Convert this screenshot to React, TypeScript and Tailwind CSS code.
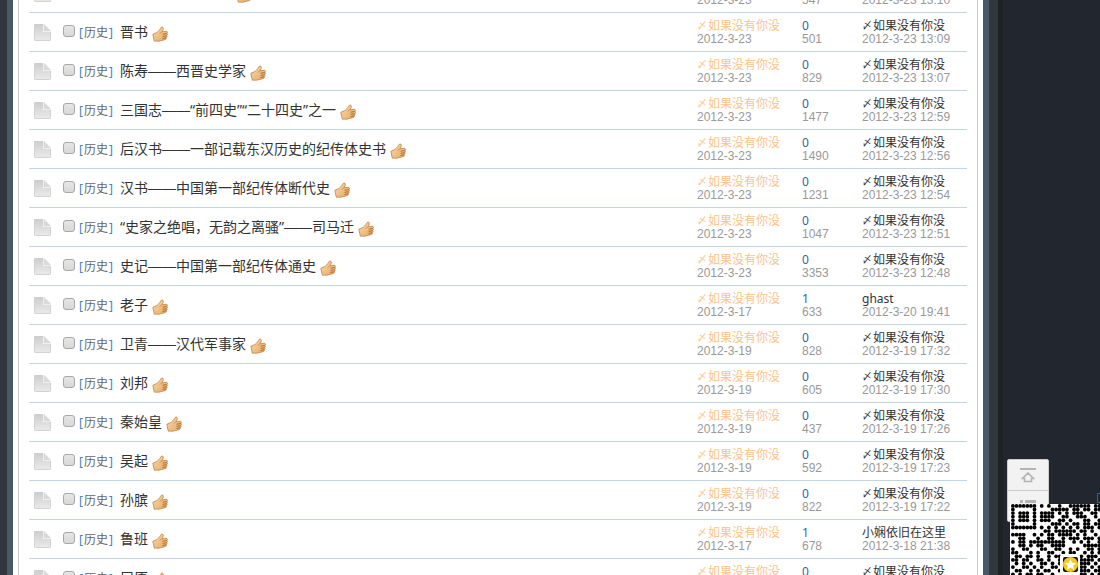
import { useState } from 'react'

interface Thread {
  title:    string
  author:   string
  date:     string
  replies:  number
  views:    number
  lastBy:   string
  lastDate: string
}

const ME = '〆如果没有你没'

const threads: Thread[] = [
  { title: '房玄龄——唐名相', author: ME, date: '2012-3-23', replies: 0, views: 547, lastBy: ME, lastDate: '2012-3-23 13:10' },
  { title: '晋书', author: ME, date: '2012-3-23', replies: 0, views: 501, lastBy: ME, lastDate: '2012-3-23 13:09' },
  { title: '陈寿——西晋史学家', author: ME, date: '2012-3-23', replies: 0, views: 829, lastBy: ME, lastDate: '2012-3-23 13:07' },
  { title: '三国志——“前四史”“二十四史”之一', author: ME, date: '2012-3-23', replies: 0, views: 1477, lastBy: ME, lastDate: '2012-3-23 12:59' },
  { title: '后汉书——一部记载东汉历史的纪传体史书', author: ME, date: '2012-3-23', replies: 0, views: 1490, lastBy: ME, lastDate: '2012-3-23 12:56' },
  { title: '汉书——中国第一部纪传体断代史', author: ME, date: '2012-3-23', replies: 0, views: 1231, lastBy: ME, lastDate: '2012-3-23 12:54' },
  { title: '“史家之绝唱，无韵之离骚”——司马迁', author: ME, date: '2012-3-23', replies: 0, views: 1047, lastBy: ME, lastDate: '2012-3-23 12:51' },
  { title: '史记——中国第一部纪传体通史', author: ME, date: '2012-3-23', replies: 0, views: 3353, lastBy: ME, lastDate: '2012-3-23 12:48' },
  { title: '老子', author: ME, date: '2012-3-17', replies: 1, views: 633, lastBy: 'ghast', lastDate: '2012-3-20 19:41' },
  { title: '卫青——汉代军事家', author: ME, date: '2012-3-19', replies: 0, views: 828, lastBy: ME, lastDate: '2012-3-19 17:32' },
  { title: '刘邦', author: ME, date: '2012-3-19', replies: 0, views: 605, lastBy: ME, lastDate: '2012-3-19 17:30' },
  { title: '秦始皇', author: ME, date: '2012-3-19', replies: 0, views: 437, lastBy: ME, lastDate: '2012-3-19 17:26' },
  { title: '吴起', author: ME, date: '2012-3-19', replies: 0, views: 592, lastBy: ME, lastDate: '2012-3-19 17:23' },
  { title: '孙膑', author: ME, date: '2012-3-19', replies: 0, views: 822, lastBy: ME, lastDate: '2012-3-19 17:22' },
  { title: '鲁班', author: ME, date: '2012-3-17', replies: 1, views: 678, lastBy: '小娴依旧在这里', lastDate: '2012-3-18 21:38' },
  { title: '屈原', author: ME, date: '2012-3-19', replies: 0, views: 716, lastBy: ME, lastDate: '2012-3-19 17:18' },
]

const qrRows = [
  '1111111010100100111111011',
  '1000001000011111011011011',
  '1011101011110101011100110',
  '1011101011110011001110010',
  '1011101011100110100011001',
  '1000001000011101011011011',
  '1111111010101010101011101',
  '0000000001101111110110100',
  '1111001010110111101010010',
  '0011000100110010111011101',
  '1011011111111110010101001',
  '0011010110011110000011111',
  '1001100011001100101001101',
  '1100010100110010110010101',
  '0110110100101100001101110',
  '1101100110100100000111101',
  '0101010011010110000111010',
  '1001101010011010000110101',
  '0110010101100101001111011',
  '1010110110010011010110101',
]

function PageIcon() {
  return (
    <svg width="17" height="17" viewBox="0 0 17 17" className="block">
      <defs>
        <linearGradient id="page" x1="0" y1="0" x2="0" y2="1">
          <stop offset="0" stopColor="#cdcdcd" />
          <stop offset="1" stopColor="#ebebeb" />
        </linearGradient>
      </defs>
      <path d="M1 0H9V8H17V16Q17 17 16 17H1Q0 17 0 16V1Q0 0 1 0Z" fill="url(#page)" />
      <path d="M.5 1V15.5Q.5 16.5 1.5 16.5H15.5Q16.5 16.5 16.5 15.5V8" fill="none" stroke="#d2d2d2" />
      <path d="M10 0L17 7H10Z" fill="#d9d9d9" />
      <path d="M9.5 0V7.5H17" fill="none" stroke="#efefef" />
    </svg>
  )
}

function ThumbIcon() {
  return (
    <svg width="16" height="16" viewBox="0 0 16 16" className="mt-[3px] shrink-0">
      <defs>
        <linearGradient id="thumb" x1="0" y1="0" x2="1" y2="1">
          <stop offset="0" stopColor="#fbdcae" />
          <stop offset="1" stopColor="#e3a55f" />
        </linearGradient>
      </defs>
      <path
        d="M.8 8.3L4.2 6.8C6 5.8 7.6 4.2 8.6 2.2C9.2 .7 11.2 .6 11.3 2.2C11.4 3.4 10.6 4.8 10 5.8L14.2 5.3C15.7 5.3 15.8 7 14.9 7.5C15.7 8 15.5 9.3 14.7 9.7C15.3 10.3 15 11.4 14.2 11.8C14.6 12.6 14 13.4 13.2 13.6L6.8 15.2C5 15.6 3.8 14.8 2.3 15.2Z"
        fill="url(#thumb)"
        stroke="#bf8447"
        strokeWidth=".8"
        strokeLinejoin="round"
      />
      <path d="M10.5 8.2L14.8 7.5M10.6 10.4L14.6 9.7M10.5 12.5L14.1 11.8" stroke="#a9672c" strokeWidth=".9" />
      <path d="M9.9 5.9L7.6 7.4" stroke="#c98a49" strokeWidth=".8" />
    </svg>
  )
}

// the leading 〆 of a nickname is drawn smaller than the rest
function UserName({ name }: { name: string }) {
  if (!name.startsWith('〆')) return <>{name}</>
  return (
    <>
      <span className="w-[11px] text-[10px]">〆</span>
      {name.slice(1)}
    </>
  )
}

// dashes come from a font where two of them join into one line
function Title({ text }: { text: string }) {
  const [before, after] = text.split('——')
  if (after === undefined) return <>{text}</>
  return (
    <>
      {before}
      <span className="font-['Liberation_Sans',sans-serif]">——</span>
      {after}
    </>
  )
}

function ThreadRow({ thread }: { thread: Thread }) {
  const [checked, setChecked] = useState(false)

  return (
    <tr className="border-b border-[#c2d5e3]">
      <td className="pl-[5px]">
        <PageIcon />
      </td>
      <td>
        <div className="flex h-5 items-center">
          <input
            type="checkbox"
            aria-label={thread.title}
            checked={checked}
            onChange={e => setChecked(e.target.checked)}
            className="appearance-none size-3 mb-[2px] shrink-0 rounded-[3px] border border-[#a8a8a8] bg-linear-to-b from-[#e6e6e6] to-[#d8d8d8] checked:bg-[#369]"
          />
          <span className="mt-[2px] ml-1 w-[41px] shrink-0 text-xs text-[#3f82bd]">
            [<a href="#history" className="px-px text-[#666]">历史</a>]
          </span>
          <a href="#thread" className="mr-1 text-sm leading-5 whitespace-nowrap text-[#333]"><Title text={thread.title} /></a>
          <ThumbIcon />
        </div>
      </td>
      <td className="py-[6px]">
        <a href="#user" className="flex h-[13px] text-[#fdc38c]"><UserName name={thread.author} /></a>
        <span className="block h-[13px] font-['Liberation_Sans',sans-serif] leading-[15px] text-[#999]">{thread.date}</span>
      </td>
      <td className="py-[6px]">
        <a href="#replies" className="flex h-[13px] text-[#369]">{thread.replies}</a>
        <span className="block h-[13px] font-['Liberation_Sans',sans-serif] leading-[15px] text-[#999]">{thread.views}</span>
      </td>
      <td className="py-[6px] whitespace-nowrap">
        <a href="#user" className="flex h-[13px] text-[#333]"><UserName name={thread.lastBy} /></a>
        <a href="#last" className="block h-[13px] font-['Liberation_Sans',sans-serif] leading-[15px] text-[#999]">{thread.lastDate}</a>
      </td>
    </tr>
  )
}

function QrCode() {
  return (
    <svg width="90" height="72" viewBox="0 0 90 72" className="block">
      <rect width="90" height="72" fill="#fff" />
      {qrRows.map((row, y) =>
        row.split('').map((cell, x) => cell === '1' && (
          <circle key={`${x}-${y}`} cx={x * 3.6 + 2.9} cy={y * 3.6 + 1.9} r="1.9" fill="#000" />
        ))
      )}
      <rect x="50" y="50" width="20" height="22" rx="3" fill="#fff" />
      <rect x="53" y="53" width="15" height="15" rx="2" fill="#161616" />
      <circle cx="60.5" cy="60.5" r="7.6" fill="#f7c81e" />
      <path d="M60.5 55L62.2 58.7L66.2 59.1L63.2 61.8L64.1 65.8L60.5 63.7L56.9 65.8L57.8 61.8L54.8 59.1L58.8 58.7Z" fill="#fff" />
    </svg>
  )
}

export default function App() {
  return (
    <div className="flex h-screen overflow-hidden bg-[#22272f] font-['Noto_Sans','Noto_Sans_CJK_SC',sans-serif]">
      <div className="w-[7px] shrink-0 bg-[#30373f]" />
      <main className="flex-1 min-w-0 border-x-6 border-[#4a5767] bg-white px-[5px]">
        <div className="flow-root h-full overflow-hidden border-x border-[#ccc] px-[10px]">
          <table className="-mt-[26px] w-full table-fixed text-xs leading-[13px]">
            <colgroup>
              <col className="w-[34px]" />
              <col />
              <col className="w-[105px]" />
              <col className="w-[60px]" />
              <col className="w-[105px]" />
            </colgroup>
            <tbody>
              {threads.map((thread, i) => <ThreadRow key={i} thread={thread} />)}
            </tbody>
          </table>
        </div>
      </main>
      <div className="w-[9px] shrink-0 bg-[#30373f]" />
      <div className="w-[102px] shrink-0 border-l-5 border-[#1f2225]" />

      {/* Side buttons */}
      <div className="fixed right-[51px] bottom-[53px] w-[42px] overflow-hidden rounded-[2px] border border-[#ccc] bg-[#f2f2f2]">
        <button aria-label="返回顶部" className="flex h-[31px] w-full items-center justify-center border-b border-[#ccc]">
          <svg width="16" height="15" viewBox="0 0 16 15" fill="none" stroke="#b4b4b4">
            <path d="M0 1H16" strokeWidth="2" />
            <path d="M8 5L13.5 10.5H11.5V13.5H4.5V10.5H2.5Z" strokeWidth="1.6" />
          </svg>
        </button>
        <button aria-label="返回列表" className="flex h-[30px] w-full justify-center pt-[9px]">
          <svg width="16" height="12" viewBox="0 0 16 12" fill="#b4b4b4">
            <path d="M0 0H3V3H0ZM5 0H16V3H5ZM0 5H3V8H0ZM5 5H16V8H5Z" />
          </svg>
        </button>
      </div>

      {/* QR code */}
      <div className="fixed right-0 bottom-0 w-[90px] overflow-hidden">
        <div className="mb-px ml-auto h-[10px] w-[3px] border border-r-0 border-[#2f5f94]" />
        <div className="h-[71px] overflow-hidden">
          <QrCode />
        </div>
      </div>
    </div>
  )
}
